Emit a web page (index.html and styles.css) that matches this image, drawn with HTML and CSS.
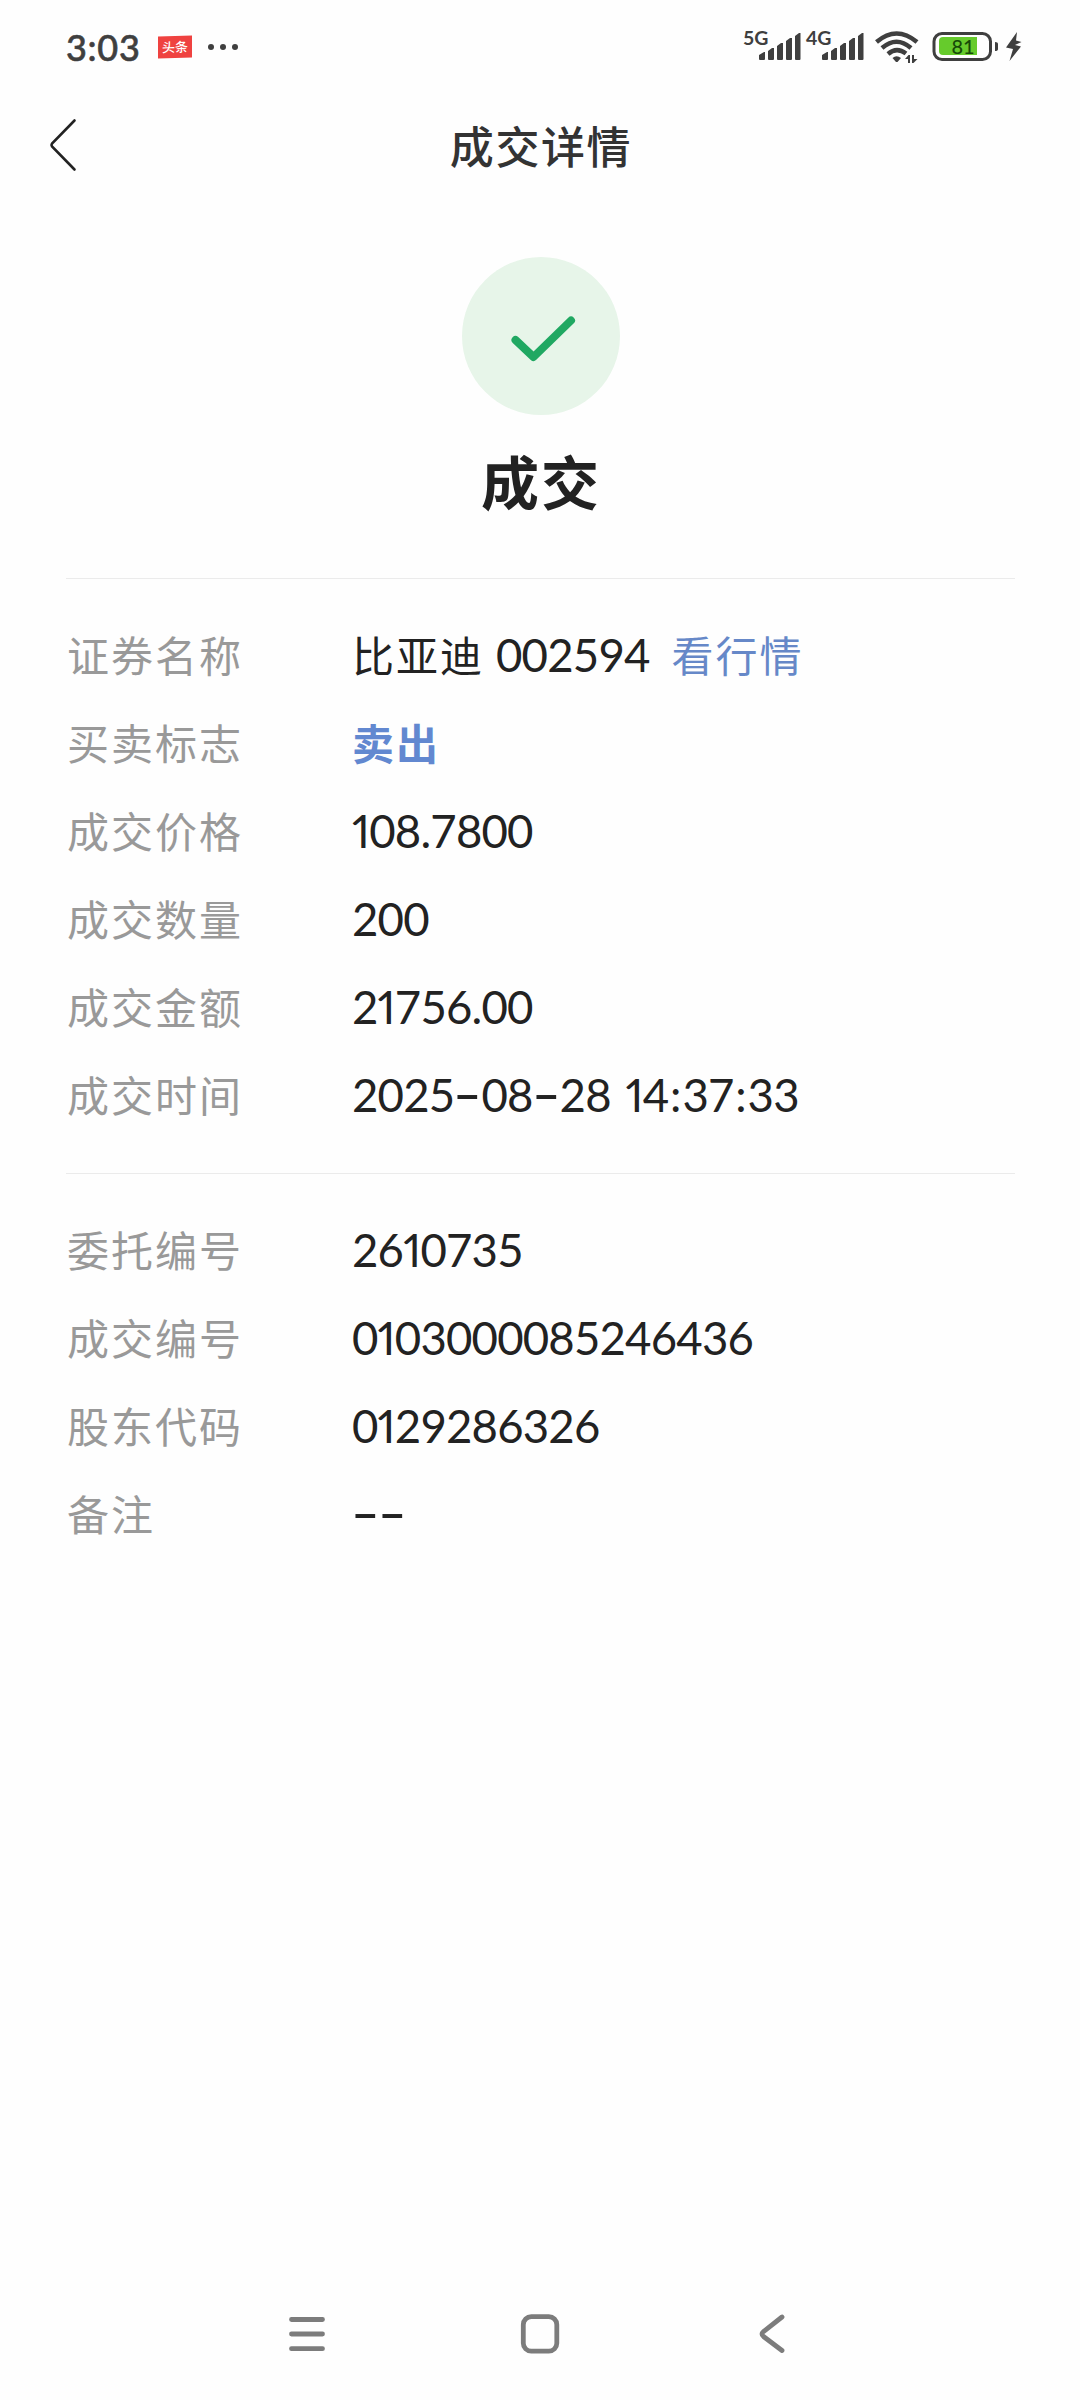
FILE: index.html
```html
<!DOCTYPE html>
<html lang="zh-CN">
<head>
    <meta charset="UTF-8">
    <meta name="viewport" content="width=device-width, initial-scale=1.0">
    <title>成交详情</title>
    <link rel="stylesheet" href="styles.css">
</head>
<body>
    <div class="status-bar">
        <span class="time">3:03</span>
        <span class="app-logo"><span class="app-band">头条</span></span>
        <svg class="more" width="32" height="8" viewBox="0 0 32 8" fill="#3f3f3f">
            <circle cx="4" cy="4" r="3"/><circle cx="16" cy="4" r="3"/><circle cx="28" cy="4" r="3"/>
        </svg>
        <svg class="status-icons" width="282" height="40" viewBox="742 27 282 40" fill="#3f3f3f">
            <!-- Señal 5G -->
            <text class="net" x="743" y="45">5G</text>
            <path d="M759 55l5-3h1v7q0 1-1 1h-4q-1 0-1-1zM768 51l4-3h2v11q0 1-1 1h-4q-1 0-1-1zM777 46l4-3h2v16q0 1-1 1h-4q-1 0-1-1zM786 41l4-3h2v21q0 1-1 1h-4q-1 0-1-1zM795 36l4-3h1.500v26q0 1-1 1h-3.500q-1 0-1-1z"/>
            <!-- Señal 4G -->
            <text class="net" x="806" y="45">4G</text>
            <path transform="translate(63 0)" d="M759 55l5-3h1v7q0 1-1 1h-4q-1 0-1-1zM768 51l4-3h2v11q0 1-1 1h-4q-1 0-1-1zM777 46l4-3h2v16q0 1-1 1h-4q-1 0-1-1zM786 41l4-3h2v21q0 1-1 1h-4q-1 0-1-1zM795 36l4-3h1.500v26q0 1-1 1h-3.500q-1 0-1-1z"/>
            <!-- WiFi -->
            <g fill="none" stroke="#3f3f3f" stroke-width="4.500">
                <path d="M876.500 42Q896.500 25 917 42"/>
                <path d="M882 48Q896.500 35.500 911 48"/>
                <path d="M888 54Q896.500 46.500 906 53.500"/>
            </g>
            <path d="M892.500 58q4-3.500 8.500 0l-3.500 4h-1.500z"/>
            <path d="M905 59l3.500-4h1.500v8h-2v-4zM912 55h2v4h3.500l-4 4H912z"/>
            <!-- Batería -->
            <rect x="934" y="33.500" width="56.500" height="26" rx="8" fill="none" stroke="#3f3f3f" stroke-width="3"/>
            <path fill="#66cb2c" d="M943 37h34v18h-34q-4 0-4-4V41q0-4 4-4z"/>
            <text class="level" x="951.500" y="54">81</text>
            <path d="M995 42q3 0 3 2v5q0 2-3 2z"/>
            <path d="M1017 32l-11 15.500 7 1.500-3.500 12L1021 46.500l-6-1.500 6.500-3-5.500-1.500z"/>
        </svg>
    </div>

    <div class="header">
        <svg class="back" width="30" height="54" viewBox="0 0 30 54">
            <path d="M26.500 2.500L4 25.500Q3 27 4 28.500L26.500 51.500"/>
        </svg>
        <h1>成交详情</h1>
    </div>

    <div class="result">
        <div class="result-icon">
            <svg width="70" height="54" viewBox="0 0 70 54">
                <path d="M9.500 31L27.500 48L65 11.500"/>
            </svg>
        </div>
        <h2>成交</h2>
    </div>

    <div class="details">
        <div class="row"><span class="label">证券名称</span><span class="value">比亚迪<span class="code">002594</span><a class="link">看行情</a></span></div>
        <div class="row"><span class="label">买卖标志</span><span class="value sell">卖出</span></div>
        <div class="row"><span class="label">成交价格</span><span class="num"><i class="one">1</i>08.7800</span></div>
        <div class="row"><span class="label">成交数量</span><span class="num">200</span></div>
        <div class="row"><span class="label">成交金额</span><span class="num">2<i class="one">1</i>756.00</span></div>
        <div class="row"><span class="label">成交时间</span><span class="num date">2025<i class="dash">-</i>08<i class="dash">-</i>28 <i class="one">1</i>4<i class="colon">:</i>37<i class="colon">:</i>33</span></div>
    </div>

    <div class="details">
        <div class="row"><span class="label">委托编号</span><span class="num">26<i class="one">1</i>0735</span></div>
        <div class="row"><span class="label">成交编号</span><span class="num">0<i class="one">1</i>03000085246436</span></div>
        <div class="row"><span class="label">股东代码</span><span class="num">0<i class="one">1</i>29286326</span></div>
        <div class="row"><span class="label">备注</span><span class="num"><i class="dash">-</i><i class="dash">-</i></span></div>
    </div>

    <div class="nav-bar">
        <svg width="40" height="44" viewBox="0 0 40 44"><path d="M4.500 7.500h31M4.500 22h31M4.500 36.700h31"/></svg>
        <svg width="44" height="44" viewBox="0 0 44 44"><rect x="5.300" y="4.700" width="33.500" height="34.500" rx="8"/></svg>
        <svg width="40" height="44" viewBox="0 0 40 44"><path d="M29 5L10.500 19.500Q7.500 22 10.500 24.500L29 38.500"/></svg>
    </div>
</body>
</html>
```

FILE: styles.css
```css
* {
    box-sizing: border-box;
}
body {
    margin: 0;
    height: 2400px;
    display: flex;
    flex-direction: column;
    background-color: #fefefe;
    color: #222;
    font-family: Lato, "Noto Sans CJK SC", sans-serif;
}
.status-bar {
    height: 94px;
    padding: 0 56px 0 66px;
    display: flex;
    align-items: center;
    color: #3f3f3f;
}
.time {
    width: 92px;
    font-size: 36px;
    font-weight: 500;
    letter-spacing: 0.7px;
    -webkit-text-stroke: 0.6px #3f3f3f;
}
.app-logo {
    width: 34px;
    height: 34px;
    display: flex;
    align-items: center;
    border-radius: 8px;
}
.app-band {
    width: 34px;
    height: 22px;
    line-height: 21px;
    text-align: center;
    background-color: #ef4240;
    color: #fff;
    font-family: "Noto Sans CJK SC", sans-serif;
    font-size: 13px;
    font-weight: 500;
    transform: skewY(-2deg);
}
.more {
    margin-left: 15px;
}
.status-icons {
    margin-left: auto;
}
.net {
    font-size: 19.5px;
    font-weight: 700;
}
.level {
    font-size: 20px;
    font-weight: 500;
    fill: #174a08;
}
.header {
    height: 101px;
    padding: 0 48px;
    display: grid;
    grid-template-columns: 30px 1fr 28px;
    align-items: center;
}
.back path {
    fill: none;
    stroke: #222;
    stroke-width: 2.6;
    stroke-linecap: round;
}
h1 {
    margin: 0;
    text-align: center;
    font-size: 44px;
    font-weight: 500;
    letter-spacing: 1.6px;
    color: #333;
}
.result {
    height: 383px;
    padding: 62px 0 0 2px;
    display: flex;
    flex-direction: column;
    align-items: center;
}
.result-icon {
    width: 158px;
    height: 158px;
    display: flex;
    align-items: center;
    justify-content: center;
    border-radius: 50%;
    background-color: #e7f5e9;
}
.result-icon path {
    fill: none;
    stroke: #20a862;
    stroke-width: 8;
    stroke-linecap: round;
    stroke-linejoin: round;
}
h2 {
    margin: 26px 0 0;
    font-size: 58px;
    line-height: 84px;
    font-weight: 700;
    letter-spacing: 2px;
}
.details {
    margin: 0 65px 0 66px;
    padding: 33px 0;
    border-top: 1px solid #ebebeb;
}
.row {
    height: 88px;
    display: flex;
    align-items: center;
    font-size: 42px;
    line-height: 60px;
    letter-spacing: 2px;
}
.label {
    width: 286px;
    padding-left: 1px;
    color: #999;
}
.value {
    display: flex;
    align-items: center;
}
.code, .num {
    padding-bottom: 2px;
    font-size: 45.5px;
    letter-spacing: -0.8px;
}
.code {
    margin: 0 22px 0 12px;
}
.link {
    color: #6688c8;
}
.sell {
    color: #6288d0;
    font-weight: 700;
}
.one, .dash, .colon {
    display: inline-block;
    font-style: normal;
}
.one {
    font-variant-numeric: proportional-nums;
}
.date {
    word-spacing: 4px;
}
.colon {
    width: 14px;
    text-align: center;
}
.dash {
    width: 27px;
    text-align: center;
    transform: translate(-1px, -2px) scale(1.75, 1.15);
}
.nav-bar {
    margin-top: auto;
    height: 132px;
    padding: 0 287px 0 287px;
    display: flex;
    align-items: center;
    justify-content: space-between;
}
.nav-bar path, .nav-bar rect {
    fill: none;
    stroke: #7c7c7c;
    stroke-width: 4.8;
    stroke-linecap: round;
}
```
